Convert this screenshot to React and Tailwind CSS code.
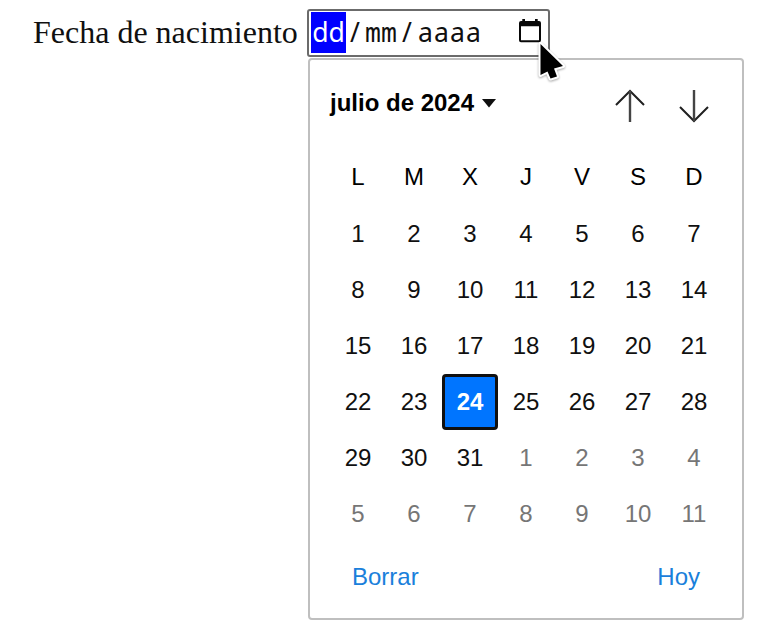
const weekdays = ['L', 'M', 'X', 'J', 'V', 'S', 'D'];

const days = Array.from({ length: 42 }, (_, i) =>
  i < 31 ? { n: i + 1, out: false } : { n: i - 30, out: true }
);

function dayClass(day) {
  if (day.out) return 'text-[#767676]';
  if (day.n === 24)
    return 'text-white font-bold bg-[#0075ff] border-[3px] border-[#101010] rounded-[4px]';
  return 'text-[#101010]';
}

function DateField() {
  return (
    <div className="flex h-[48px] w-[243px] items-start rounded-[3px] border-2 border-[#6b6b6b] bg-white pt-px pl-[2px] font-['Noto_Sans',sans-serif] text-[26.6px] leading-[40px] text-[#101010]">
      <span className="h-[41px] w-[35px] bg-[#0000ff] text-center text-white">dd</span>
      <span className="w-[18px] text-center">/</span>
      <span className="w-[34px] text-center font-['Noto_Sans_Mono','DejaVu_Sans_Mono',monospace] leading-[40px]">mm</span>
      <span className="w-[18px] text-center">/</span>
      <span className="w-[67px] pl-[2px] tracking-[1.1px]">aaaa</span>
      <svg className="mt-[7px] ml-[36px] shrink-0" width="22" height="24" viewBox="0 0 22 24">
        <path
          d="M3.300 0h2.700v2h10V0h2.700v2H20a2 2 0 0 1 2 2v17.200a2 2 0 0 1-2 2H2a2 2 0 0 1-2-2V4a2 2 0 0 1 2-2h1.300zM2 7.300v13.900h18V7.300z"
          fill="#080808"
          fillRule="evenodd"
        />
      </svg>
    </div>
  );
}

function Calendar() {
  return (
    <div className="mt-px ml-[308px] flex h-[562px] w-[436px] flex-col rounded-[4px] border-2 border-[#bfbfbf] bg-white font-['Liberation_Sans',Arial,sans-serif] text-[24px] text-[#101010]">
      <div className="flex h-[88px] items-center pl-[20px]">
        <button className="-mt-[2px] flex items-center font-bold leading-[28px] text-black">
          <span>julio de 2024</span>
          <svg className="ml-[8px]" width="14" height="9" viewBox="0 0 14 9">
            <path d="M0 0h14L7 8.5z" fill="#101010" />
          </svg>
        </button>
        <svg className="mt-[4px] ml-auto" width="30" height="34" viewBox="0 0 30 34" fill="none" stroke="#202020" strokeWidth="2">
          <path d="M1 16L15 2L29 16" />
          <path d="M15 2V33" stroke="#444" strokeWidth="2.400" />
        </svg>
        <svg className="mt-[4px] mr-[33px] ml-[34px]" width="30" height="34" viewBox="0 0 30 34" fill="none" stroke="#202020" strokeWidth="2">
          <path d="M1 18L15 32L29 18" />
          <path d="M15 32V1" stroke="#444" strokeWidth="2.400" />
        </svg>
      </div>
      <div className="ml-[20px] grid h-[58px] w-[392px] grid-cols-7">
        {weekdays.map((d) => (
          <div key={d} className="flex items-center justify-center pb-px text-black">{d}</div>
        ))}
      </div>
      <div className="ml-[20px] grid w-[392px] grid-cols-7">
        {days.map((day, i) => (
          <div key={i} className="flex h-[56px] items-center justify-center">
            <span className={`flex h-[56px] w-[56px] items-center justify-center ${dayClass(day)}`}>{day.n}</span>
          </div>
        ))}
      </div>
      <div className="flex justify-between pt-[21px] pr-[42px] pl-[42px] leading-[28px] text-[#1a80db]">
        <button>Borrar</button>
        <button>Hoy</button>
      </div>
    </div>
  );
}

export default function App() {
  return (
    <div className="relative h-[631px] w-[774px] overflow-hidden bg-white pt-[9px]">
      <div className="flex">
        <label className="w-[307px] pl-[33px] font-['Liberation_Serif','Times_New_Roman',serif] text-[32px] leading-[46px] whitespace-nowrap text-[#101010]">
          Fecha de nacimiento
        </label>
        <DateField />
      </div>
      <Calendar />
      <svg
        className="absolute top-[39px] left-[536px] drop-shadow-[0_1px_1px_rgba(0,0,0,0.35)]"
        width="32"
        height="46"
        viewBox="0 0 32 46"
      >
        <path
          d="M4.500 5V36L11.500 32.500L14.500 39.500L21 37.500L18 29.500L27 27Z"
          fill="#000"
          stroke="#fff"
          strokeWidth="4"
          strokeLinejoin="round"
          paintOrder="stroke"
        />
      </svg>
    </div>
  );
}
